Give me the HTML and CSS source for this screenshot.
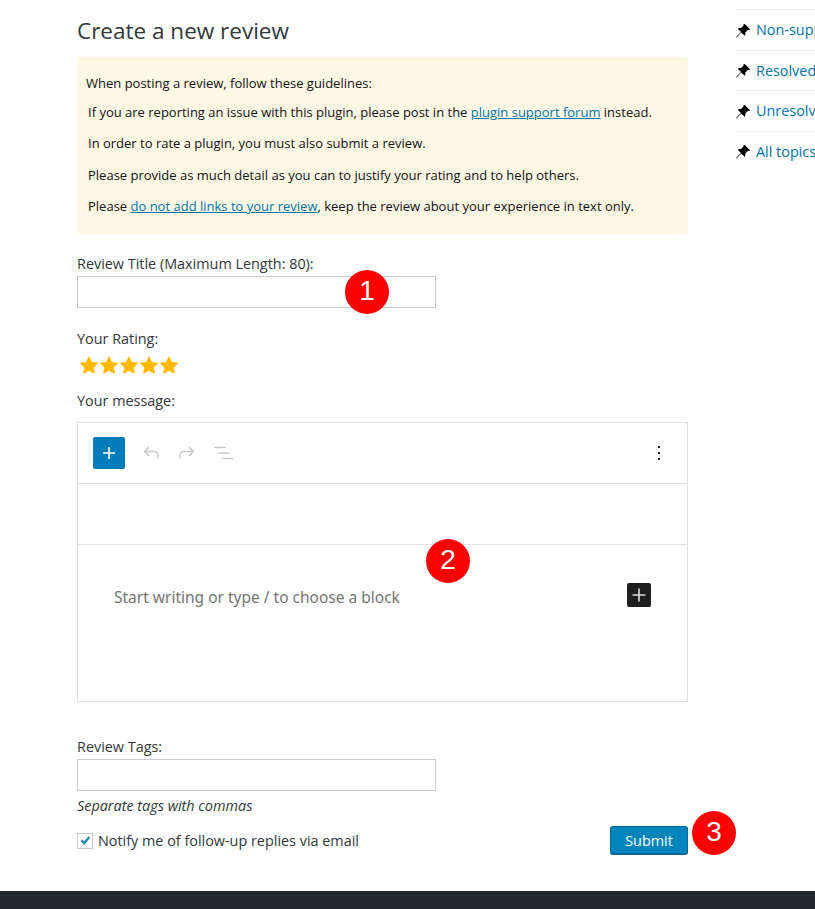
FILE: index.html
```html
<!DOCTYPE html>
<html lang="en">
<head>
    <meta charset="UTF-8">
    <meta name="viewport" content="width=device-width, initial-scale=1.0">
    <title>Create a new review</title>
    <link rel="stylesheet" href="styles.css">
</head>
<body>
    <div class="page">
        <div class="main">
            <h2 class="title">Create a new review</h2>
            <div class="notice">
                <p class="notice-head">When posting a review, follow these guidelines:</p>
                <ul class="rules">
                    <li>If you are reporting an issue with this plugin, please post in the <a href="#">plugin support forum</a> instead.</li>
                    <li>In order to rate a plugin, you must also submit a review.</li>
                    <li>Please provide as much detail as you can to justify your rating and to help others.</li>
                    <li>Please <a href="#">do not add links to your review</a>, keep the review about your experience in text only.</li>
                </ul>
            </div>

            <label class="label label-title" for="reviewTitle">Review Title (Maximum Length: 80):</label>
            <input class="text-input" type="text" id="reviewTitle">

            <div class="label label-rating">Your Rating:</div>
            <div class="stars">
                <svg viewBox="0 0 20 20"><path d="M10 .8l2.900 6.100 6.600.9-4.800 4.600 1.200 6.600L10 15.800 4.100 19l1.200-6.600L.5 7.800l6.600-.9z"/></svg>
                <svg viewBox="0 0 20 20"><path d="M10 .8l2.900 6.100 6.600.9-4.800 4.600 1.200 6.600L10 15.800 4.100 19l1.200-6.600L.5 7.800l6.600-.9z"/></svg>
                <svg viewBox="0 0 20 20"><path d="M10 .8l2.900 6.100 6.600.9-4.800 4.600 1.200 6.600L10 15.800 4.100 19l1.200-6.600L.5 7.800l6.600-.9z"/></svg>
                <svg viewBox="0 0 20 20"><path d="M10 .8l2.900 6.100 6.600.9-4.800 4.600 1.200 6.600L10 15.800 4.100 19l1.200-6.600L.5 7.800l6.600-.9z"/></svg>
                <svg viewBox="0 0 20 20"><path d="M10 .8l2.900 6.100 6.600.9-4.800 4.600 1.200 6.600L10 15.800 4.100 19l1.200-6.600L.5 7.800l6.600-.9z"/></svg>
            </div>

            <div class="label label-message">Your message:</div>
            <div class="editor">
                <div class="editor-toolbar">
                    <button class="add-block" type="button">
                        <svg viewBox="0 0 16 16" width="16" height="16"><path d="M7.200 2h1.600v5.200H14v1.600H8.800V14H7.200V8.800H2V7.200h5.200z"/></svg>
                    </button>
                    <svg class="tool" viewBox="0 0 24 24" width="24" height="24"><path d="M10 6L5.500 10.500 10 15M5.500 10.500H15.500a3.500 3.500 0 0 1 3.500 3.500V17.500"/></svg>
                    <svg class="tool" viewBox="0 0 24 24" width="24" height="24"><path d="M14 6l4.500 4.500L14 15M18.500 10.500H8.500A3.500 3.500 0 0 0 5 14v3.500"/></svg>
                    <svg class="tool" viewBox="0 0 24 24" width="24" height="24"><path d="M3.500 6.500h11M7.500 12h11M11 17.500h11"/></svg>
                    <div class="dots"><span></span><span></span><span></span></div>
                </div>
                <div class="editor-titlebar"></div>
                <div class="editor-body">
                    <span class="placeholder">Start writing or type / to choose a block</span>
                    <button class="inline-add" type="button">
                        <svg viewBox="0 0 16 16" width="16" height="16"><path d="M7.200 1.500h1.600v5.700h5.700v1.600H8.800v5.700H7.200V8.800H1.500V7.200h5.700z"/></svg>
                    </button>
                </div>
            </div>

            <label class="label label-tags" for="reviewTags">Review Tags:</label>
            <input class="text-input" type="text" id="reviewTags">
            <p class="hint">Separate tags with commas</p>

            <div class="form-end">
                <label class="notify">
                    <span class="checkbox">
                        <svg viewBox="0 0 16 16" width="16" height="16"><path d="M3 8.200l1.900-1.900 2 2.100L12 2.500l1.900 1.700-6.800 8.300z"/></svg>
                    </span>
                    Notify me of follow-up replies via email
                </label>
                <button class="submit" type="button">Submit</button>
            </div>

            <span class="marker marker-1">1</span>
            <span class="marker marker-2">2</span>
            <span class="marker marker-3">3</span>
        </div>

        <div class="sidebar">
            <ul class="views">
                <li><svg viewBox="0 0 16 16" width="16" height="16"><path d="M9.800 1l5.200 5.200-1.100 1-1-.4-2.600 2.600c.4 1.300.1 2.500-.7 3.300L6.300 9.400 1.500 14.500 1 14l5-4.900-3.300-3.300c.9-.8 2.100-1.100 3.300-.7l2.600-2.600-.4-1z"/></svg><a href="#">Non-support</a></li>
                <li><svg viewBox="0 0 16 16" width="16" height="16"><path d="M9.800 1l5.200 5.200-1.100 1-1-.4-2.600 2.600c.4 1.300.1 2.500-.7 3.300L6.300 9.400 1.500 14.500 1 14l5-4.900-3.300-3.300c.9-.8 2.100-1.100 3.300-.7l2.600-2.600-.4-1z"/></svg><a href="#">Resolved</a></li>
                <li><svg viewBox="0 0 16 16" width="16" height="16"><path d="M9.800 1l5.200 5.200-1.100 1-1-.4-2.600 2.600c.4 1.300.1 2.500-.7 3.300L6.300 9.400 1.500 14.500 1 14l5-4.900-3.300-3.300c.9-.8 2.100-1.100 3.300-.7l2.600-2.600-.4-1z"/></svg><a href="#">Unresolved</a></li>
                <li><svg viewBox="0 0 16 16" width="16" height="16"><path d="M9.800 1l5.200 5.200-1.100 1-1-.4-2.600 2.600c.4 1.300.1 2.500-.7 3.300L6.300 9.400 1.500 14.500 1 14l5-4.900-3.300-3.300c.9-.8 2.100-1.100 3.300-.7l2.600-2.600-.4-1z"/></svg><a href="#">All topics</a></li>
            </ul>
        </div>
    </div>
    <div class="footer"></div>
</body>
</html>
```

FILE: styles.css
```css
html, body {
    height: 909px;
    overflow: hidden;
}

body {
    margin: 0;
    font-family: "Open Sans", sans-serif;
    font-size: 14.4px;
    color: #32373c;
    background: #fff;
    display: flex;
    flex-direction: column;
}

a {
    color: #0073aa;
}

.page {
    flex: 1;
    display: flex;
    padding-left: 77px;
    gap: 47px;
}

.main {
    position: relative;
    width: 611px;
    flex-shrink: 0;
}

.title {
    margin: 0;
    padding-top: 16px;
    font-size: 22.5px;
    line-height: 30px;
    font-weight: 400;
    color: #32373c;
}

.notice {
    margin-top: 11px;
    height: 177px;
    box-sizing: border-box;
    padding: 16px 9px 0;
    background: #fff8e5;
    border-radius: 2px;
    font-size: 13px;
    color: #111;
}

.notice-head {
    margin: 0;
    line-height: 20px;
}

.rules {
    margin: 0;
    padding: 0 0 0 2px;
    list-style: none;
}

.rules li {
    margin-top: 11.4px;
    line-height: 20px;
}

.rules li:first-child {
    margin-top: 9px;
}

.label {
    display: block;
    line-height: 20px;
}

.label-title {
    margin-top: 20px;
}

.label-rating {
    margin-top: 21px;
}

.label-message {
    margin-top: 16px;
}

.label-tags {
    margin-top: 35px;
}

.text-input {
    display: block;
    width: 359px;
    height: 32px;
    box-sizing: border-box;
    margin: 2px 0 0;
    border: 1px solid #ccc;
    background: #fff;
}

.stars {
    display: flex;
    height: 20px;
    margin-top: 6px;
    padding-left: 2px;
}

.stars svg {
    width: 20px;
    height: 20px;
    fill: #ffb900;
}

.editor {
    margin-top: 11px;
    height: 280px;
    box-sizing: border-box;
    border: 1px solid #e0e0e0;
    display: flex;
    flex-direction: column;
}

.editor-toolbar {
    height: 61px;
    box-sizing: border-box;
    padding: 0 15px;
    display: flex;
    align-items: center;
    gap: 12px;
    border-bottom: 1px solid #e0e0e0;
}

.add-block {
    width: 32px;
    height: 32px;
    padding: 0;
    margin-right: 2px;
    border: none;
    border-radius: 2px;
    background: #007cba;
    display: flex;
    align-items: center;
    justify-content: center;
}

.add-block svg {
    fill: #fff;
}

.tool {
    fill: none;
    stroke: #c8c8c8;
    stroke-width: 1.5;
}

.dots {
    margin-left: auto;
    margin-right: 12px;
    display: flex;
    flex-direction: column;
    gap: 4px;
}

.dots span {
    width: 2px;
    height: 2px;
    background: #1e1e1e;
}

.editor-titlebar {
    height: 61px;
    box-sizing: border-box;
    border-bottom: 1px solid #e0e0e0;
}

.editor-body {
    flex: 1;
    padding: 37px 36px 0;
    display: flex;
    justify-content: space-between;
    align-items: flex-start;
}

.placeholder {
    font-family: "Noto Sans", sans-serif;
    font-size: 15.5px;
    line-height: 30px;
    color: #757575;
}

.inline-add {
    width: 24px;
    height: 24px;
    padding: 0;
    margin-top: 1px;
    border: none;
    border-radius: 2px;
    background: #1e1e1e;
    display: flex;
    align-items: center;
    justify-content: center;
}

.inline-add svg {
    fill: #ddd;
}

.hint {
    margin: 5px 0 0;
    line-height: 20px;
    font-style: italic;
}

.form-end {
    margin-top: 10px;
    display: flex;
    align-items: center;
    justify-content: space-between;
}

.notify {
    display: flex;
    align-items: center;
    gap: 5px;
}

.checkbox {
    width: 16px;
    height: 16px;
    box-sizing: border-box;
    border: 1px solid #c4c8cc;
    display: flex;
    align-items: center;
    justify-content: center;
    flex-shrink: 0;
}

.checkbox svg {
    fill: #1e8cbe;
}

.submit {
    width: 78px;
    height: 29px;
    padding: 0;
    border: 1px solid #006799;
    border-bottom-width: 2px;
    border-radius: 3px;
    background: #0085ba;
    color: #fff;
    font-family: inherit;
    font-size: 14.4px;
}

/* numbered callouts drawn over the form */
.marker {
    position: absolute;
    width: 44px;
    height: 44px;
    border-radius: 50%;
    background: #f00;
    color: #fff;
    font-family: "Liberation Sans", sans-serif;
    font-size: 28px;
    line-height: 42px;
    text-align: center;
}

.marker-1 {
    left: 268px;
    top: 270px;
}

.marker-2 {
    left: 349px;
    top: 539px;
}

.marker-3 {
    left: 615px;
    top: 811px;
}

.sidebar {
    width: 200px;
    flex-shrink: 0;
}

.views {
    margin: 9px 0 0;
    padding: 0;
    list-style: none;
}

.views li {
    height: 40.5px;
    box-sizing: border-box;
    border-top: 1px solid #eee;
    display: flex;
    align-items: center;
    gap: 5px;
    white-space: nowrap;
}

.views li svg {
    margin-top: 2px;
}

.views a {
    color: #0073aa;
    text-decoration: none;
}

.footer {
    height: 18px;
    background: #23282d;
}
```
